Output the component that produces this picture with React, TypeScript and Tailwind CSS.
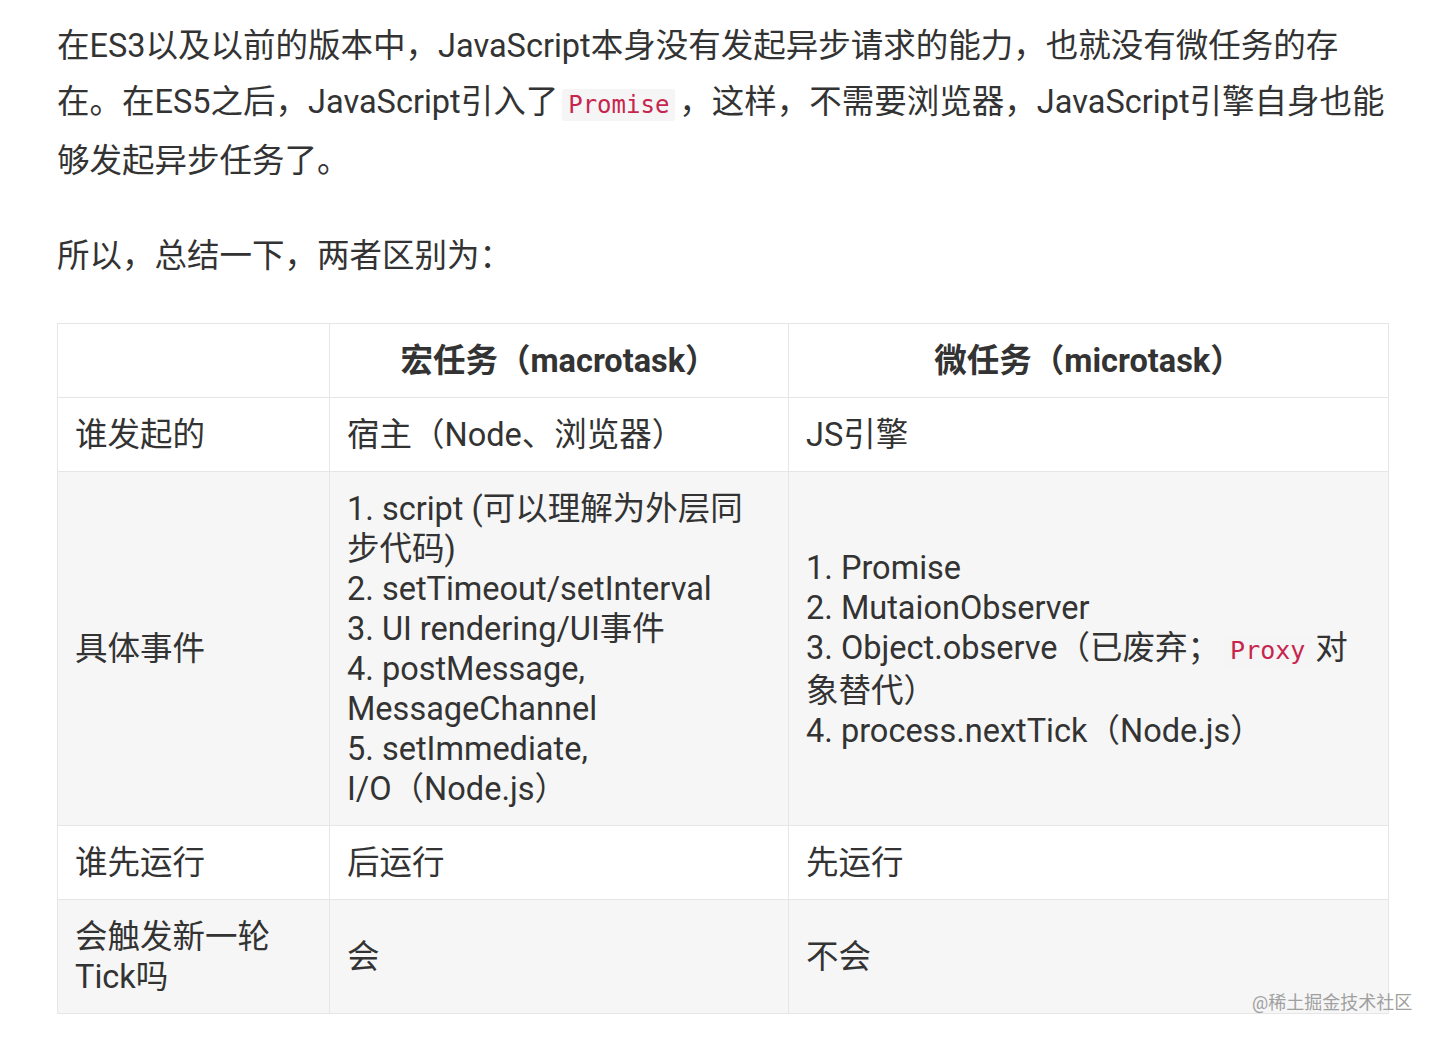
const Code = ({ children, size }: { children: string; size: string }) => (
  <code className={`mx-[4px] rounded-[2px] bg-[#f5f5f5] px-[6px] py-[2px] font-['DejaVu_Sans_Mono',monospace] text-[#c7254e] ${size}`}>
    {children}
  </code>
);

const cell = "border border-[#e6e6e6] px-[17px] pt-[17px] pb-[16px] align-middle";

const App = () => {
  return (
    <div className="relative min-h-[1040px] bg-white font-['Roboto','Noto_Sans_CJK_SC',sans-serif] text-[#333]">
      <div className="ml-[57px] w-[1332px] pt-[18px]">
        <p className="text-[32.5px] leading-[56px]">
          在ES3以及以前的版本中，JavaScript本身没有发起异步请求的能力，也就没有微任务的存在。在ES5之后，JavaScript引入了
          <Code size="text-[24px]">Promise</Code>，这样，不需要浏览器，JavaScript引擎自身也能够发起异步任务了。
        </p>
        <p className="mt-[39px] text-[32.5px] leading-[56px]">所以，总结一下，两者区别为：</p>

        <table className="mt-[39px] w-full table-fixed border-collapse text-[32.5px] leading-[40px]">
          <colgroup>
            <col className="w-[272px]" />
            <col className="w-[459px]" />
            <col />
          </colgroup>
          <thead>
            <tr className="bg-white">
              <th className={cell}></th>
              <th className={`${cell} text-center font-bold`}>宏任务（macrotask）</th>
              <th className={`${cell} text-center font-bold`}>微任务（microtask）</th>
            </tr>
          </thead>
          <tbody>
            <tr className="bg-white">
              <td className={cell}>谁发起的</td>
              <td className={cell}>宿主（Node、浏览器）</td>
              <td className={cell}>JS引擎</td>
            </tr>
            <tr className="bg-[#f6f6f6]">
              <td className={cell}>具体事件</td>
              <td className={cell}>
                1. script (可以理解为外层同步代码)
                <br />
                2. setTimeout/setInterval
                <br />
                3. UI rendering/UI事件
                <br />
                4. postMessage, MessageChannel
                <br />
                5. setImmediate, <span className="whitespace-nowrap">I/O（Node.js）</span>
              </td>
              <td className={cell}>
                1. Promise
                <br />
                2. MutaionObserver
                <br />
                3. Object.observe（已废弃；<Code size="text-[25px]">Proxy</Code>对象替代）
                <br />
                4. process.nextTick（Node.js）
              </td>
            </tr>
            <tr className="bg-white">
              <td className={cell}>谁先运行</td>
              <td className={cell}>后运行</td>
              <td className={cell}>先运行</td>
            </tr>
            <tr className="bg-[#f6f6f6]">
              <td className={cell}>会触发新一轮Tick吗</td>
              <td className={cell}>会</td>
              <td className={cell}>不会</td>
            </tr>
          </tbody>
        </table>
      </div>
      <div className="absolute left-[1252px] top-[989px] text-[18px] text-[#a0a0a0]">@稀土掘金技术社区</div>
    </div>
  );
};

export default App;
